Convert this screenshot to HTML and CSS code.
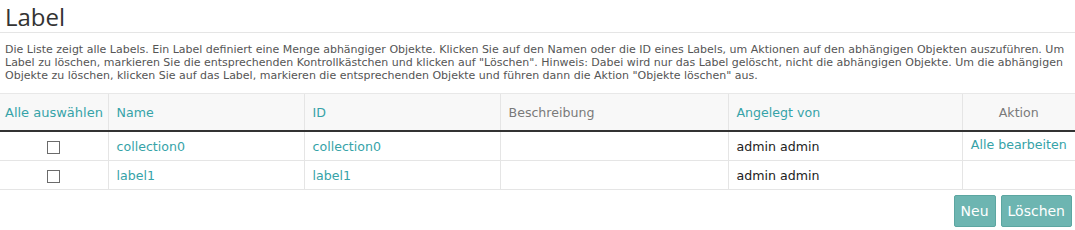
FILE: index.html
```html
<!DOCTYPE html>
<html lang="de">
<head>
<meta charset="utf-8">
<title>Label</title>
<link rel="stylesheet" href="styles.css">
</head>
<body>
<div class="page">
  <h1 class="title">Label</h1>
  <p class="intro">Die Liste zeigt alle Labels. Ein Label definiert eine Menge abhängiger Objekte. Klicken Sie auf den Namen oder die ID eines Labels, um Aktionen auf den abhängigen Objekten auszuführen. Um Label zu löschen, markieren Sie die entsprechenden Kontrollkästchen und klicken auf "Löschen". Hinweis: Dabei wird nur das Label gelöscht, nicht die abhängigen Objekte. Um die abhängigen Objekte zu löschen, klicken Sie auf das Label, markieren die entsprechenden Objekte und führen dann die Aktion "Objekte löschen" aus.</p>
  <table class="grid">
    <colgroup>
      <col class="c-sel">
      <col class="c-name">
      <col class="c-id">
      <col class="c-desc">
      <col class="c-by">
      <col class="c-act">
    </colgroup>
    <thead>
      <tr>
        <th class="link-head sel-head">Alle auswählen</th>
        <th class="link-head">Name</th>
        <th class="link-head">ID</th>
        <th class="plain-head">Beschreibung</th>
        <th class="link-head">Angelegt von</th>
        <th class="plain-head center">Aktion</th>
      </tr>
    </thead>
    <tbody>
      <tr>
        <td class="center"><span class="box"></span></td>
        <td><a class="link" href="#">collection0</a></td>
        <td><a class="link" href="#">collection0</a></td>
        <td></td>
        <td>admin admin</td>
        <td class="center action"><a class="link" href="#">Alle bearbeiten</a></td>
      </tr>
      <tr>
        <td class="center"><span class="box"></span></td>
        <td><a class="link" href="#">label1</a></td>
        <td><a class="link" href="#">label1</a></td>
        <td></td>
        <td>admin admin</td>
        <td></td>
      </tr>
    </tbody>
  </table>
  <div class="buttons">
    <button class="btn" type="button">Neu</button>
    <button class="btn" type="button">Löschen</button>
  </div>
</div>
</body>
</html>
```
FILE: styles.css
```css
html, body {
  margin: 0;
  padding: 0;
  background: #fff;
}
body {
  font-family: "DejaVu Sans", Verdana, sans-serif;
  color: #333;
}
.title {
  margin: 0;
  padding: 2px 5px 0;
  height: 30px;
  font-family: "Open Sans", "Segoe UI", sans-serif;
  font-weight: 400;
  font-size: 24px;
  line-height: 30px;
  color: #333;
  border-bottom: 1px solid #e5e5e5;
}
.intro {
  margin: 0;
  padding: 10px 5px 11px;
  font-size: 11px;
  line-height: 13px;
  color: #555;
}
.grid {
  width: 100%;
  border-collapse: collapse;
  table-layout: fixed;
  font-size: 12.6px;
}
.c-sel { width: 108px; }
.c-name { width: 196px; }
.c-id { width: 196px; }
.c-desc { width: 228px; }
.c-by { width: 234px; }
.c-act { width: 113px; }
.grid th {
  height: 36px;
  padding: 0 8px;
  background: #f8f8f8;
  border-top: 1px solid #e8e8e8;
  border-left: 1px solid #e5e5e5;
  border-bottom: 2px solid #333;
  font-weight: 400;
  text-align: left;
  white-space: nowrap;
}
.grid th:first-child,
.grid td:first-child { border-left: none; }
.grid th.sel-head { padding: 0 3px 0 5px; font-size: 13px; }
.link-head { color: #36a3a8; }
.plain-head { color: #7a7a7a; }
.grid .center { text-align: center; }
.grid td {
  height: 28px;
  padding: 0 8px;
  border-left: 1px solid #e5e5e5;
  border-bottom: 1px solid #e5e5e5;
  color: #222;
  vertical-align: middle;
}
.grid td.action { vertical-align: top; padding-top: 5px; height: 23px; }
.link {
  color: #36a3a8;
  text-decoration: none;
}
.box {
  display: inline-block;
  width: 11px;
  height: 11px;
  border: 1px solid #6b6b6b;
  vertical-align: middle;
  background: #fff;
}
.buttons {
  display: flex;
  justify-content: flex-end;
  gap: 5px;
  padding: 5px 3px 0 0;
}
.btn {
  height: 32px;
  padding: 0 6px;
  font-family: "DejaVu Sans", Verdana, sans-serif;
  font-size: 14px;
  color: #fff;
  background: #6db5b1;
  border: 1px solid #5ca6a1;
  border-radius: 2px;
}
```
